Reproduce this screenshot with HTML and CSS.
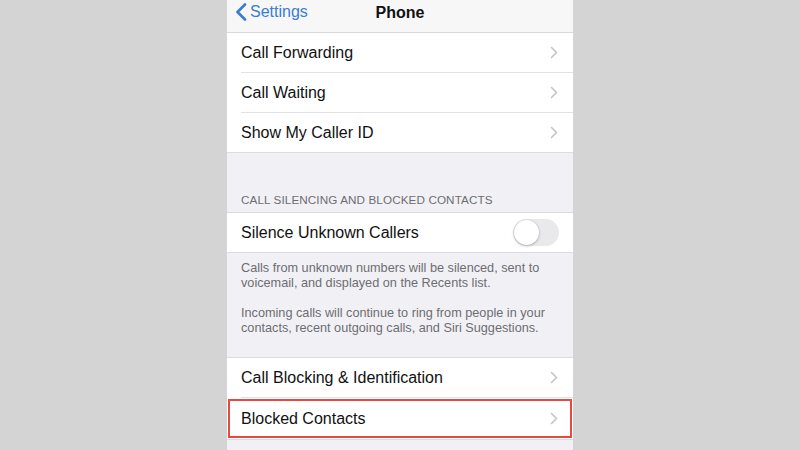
FILE: index.html
```html
<!DOCTYPE html>
<html lang="en">
<head>
    <meta charset="UTF-8">
    <meta name="viewport" content="width=device-width, initial-scale=1.0">
    <title>Phone Settings</title>
    <link rel="stylesheet" href="styles.css">
</head>
<body>
    <div class="screen">
        <div class="nav-bar">
            <div class="back">
                <svg class="back-icon" width="12" height="18" viewBox="0 0 12 18"><path d="M10 1.5 L2.5 9 L10 16.5" fill="none" stroke="#3a7bd5" stroke-width="2.6" stroke-linecap="round" stroke-linejoin="round"/></svg>
                <span>Settings</span>
            </div>
            <div class="nav-title">Phone</div>
        </div>

        <ul class="group group-top">
            <li class="row"><span>Call Forwarding</span><svg class="chevron" width="8" height="13" viewBox="0 0 8 13"><path d="M1.5 1.5 L6.5 6.5 L1.5 11.5" fill="none" stroke="#c4c4c8" stroke-width="1.6" stroke-linecap="round" stroke-linejoin="round"/></svg></li>
            <li class="row"><span>Call Waiting</span><svg class="chevron" width="8" height="13" viewBox="0 0 8 13"><path d="M1.5 1.5 L6.5 6.5 L1.5 11.5" fill="none" stroke="#c4c4c8" stroke-width="1.6" stroke-linecap="round" stroke-linejoin="round"/></svg></li>
            <li class="row"><span>Show My Caller ID</span><svg class="chevron" width="8" height="13" viewBox="0 0 8 13"><path d="M1.5 1.5 L6.5 6.5 L1.5 11.5" fill="none" stroke="#c4c4c8" stroke-width="1.6" stroke-linecap="round" stroke-linejoin="round"/></svg></li>
        </ul>

        <div class="section-header">CALL SILENCING AND BLOCKED CONTACTS</div>
        <ul class="group">
            <li class="row">
                <span>Silence Unknown Callers</span>
                <div class="toggle"><div class="knob"></div></div>
            </li>
        </ul>
        <p class="section-footer">Calls from unknown numbers will be silenced, sent to voicemail, and displayed on the Recents list.<br><br>Incoming calls will continue to ring from people in your contacts, recent outgoing calls, and Siri Suggestions.</p>

        <ul class="group">
            <li class="row"><span>Call Blocking &amp; Identification</span><svg class="chevron" width="8" height="13" viewBox="0 0 8 13"><path d="M1.5 1.5 L6.5 6.5 L1.5 11.5" fill="none" stroke="#c4c4c8" stroke-width="1.6" stroke-linecap="round" stroke-linejoin="round"/></svg></li>
            <li class="row highlighted"><span>Blocked Contacts</span><svg class="chevron" width="8" height="13" viewBox="0 0 8 13"><path d="M1.5 1.5 L6.5 6.5 L1.5 11.5" fill="none" stroke="#c4c4c8" stroke-width="1.6" stroke-linecap="round" stroke-linejoin="round"/></svg></li>
        </ul>
    </div>
</body>
</html>
```

FILE: styles.css
```css
body {
    margin: 0;
    background: #d4d4d4;
    font-family: 'Liberation Sans', Arial, sans-serif;
    display: flex;
    justify-content: center;
    height: 450px;
    overflow: hidden;
}
.screen {
    width: 346px;
    height: 450px;
    background: #f1f1f5;
    overflow: hidden;
}
.nav-bar {
    height: 32px;
    background: #f7f7f7;
    border-bottom: 1px solid #d8d8dc;
    display: flex;
    align-items: center;
    justify-content: center;
    position: relative;
}
.back {
    position: absolute;
    left: 8px;
    top: 3px;
    display: flex;
    align-items: center;
    gap: 3px;
    color: #3a7bd5;
    font-size: 16px;
}
.nav-title {
    font-size: 16px;
    font-weight: bold;
    color: #111;
    margin-top: -7px;
}
.group {
    list-style: none;
    margin: 0;
    padding: 0;
    background: white;
    border-top: 1px solid #dcdce0;
    border-bottom: 1px solid #dcdce0;
}
.group-top {
    border-top: none;
}
.row {
    height: 39px;
    margin-left: 14px;
    padding-right: 15px;
    display: flex;
    align-items: center;
    justify-content: space-between;
    font-size: 16px;
    color: #111;
    border-bottom: 1px solid #e2e2e6;
}
.row:last-child {
    border-bottom: none;
}
.highlighted {
    margin-left: 0;
    padding-left: 14px;
    outline: 2px solid #e6493f;
    outline-offset: -3px;
    height: 41px;
}
.section-header {
    height: 59px;
    box-sizing: border-box;
    padding: 40px 14px 0;
    font-size: 11.7px;
    color: #6d6d72;
    letter-spacing: 0.1px;
}
.section-footer {
    margin: 0;
    height: 104px;
    box-sizing: border-box;
    padding: 8px 14px 0;
    font-size: 12.7px;
    line-height: 15px;
    color: #6d6d72;
}
.toggle {
    width: 46px;
    height: 27px;
    margin-right: -1px;
    border-radius: 14px;
    background: #e9e9eb;
    position: relative;
}
.knob {
    position: absolute;
    left: 1px;
    top: 1px;
    width: 25px;
    height: 25px;
    border-radius: 50%;
    background: white;
    box-shadow: 0 1px 3px rgba(0, 0, 0, 0.25), 0 0 0 0.5px rgba(0, 0, 0, 0.06);
}
```
